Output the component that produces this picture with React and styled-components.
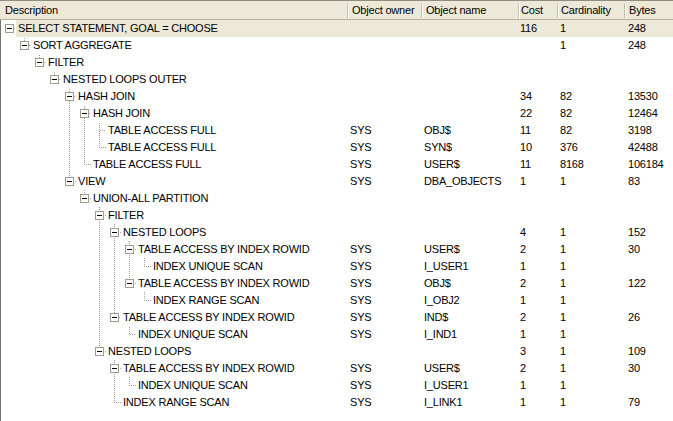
import React from "react";
import styled, { createGlobalStyle } from "styled-components";

const GlobalStyle = createGlobalStyle`
  html, body { margin: 0; padding: 0; background: #fff; }
  body { font-family: "Liberation Sans", Arial, sans-serif; }
`;

const COLS = [
  { key: "d", label: "Description", w: 348, hp: 5, bp: 0 },
  { key: "owner", label: "Object owner", w: 74, hp: 4, bp: 2 },
  { key: "name", label: "Object name", w: 97, hp: 4, bp: 2 },
  { key: "cost", label: "Cost", w: 39, hp: 2, bp: 1 },
  { key: "card", label: "Cardinality", w: 67, hp: 3, bp: 2 },
  { key: "bytes", label: "Bytes", w: 0, hp: 4, bp: 3 },
];

const ROWS = [
  { l: 0, d: "SELECT STATEMENT, GOAL = CHOOSE", cost: "116", card: "1", bytes: "248" },
  { l: 1, d: "SORT AGGREGATE", card: "1", bytes: "248" },
  { l: 2, d: "FILTER" },
  { l: 3, d: "NESTED LOOPS OUTER" },
  { l: 4, d: "HASH JOIN", cost: "34", card: "82", bytes: "13530" },
  { l: 5, d: "HASH JOIN", cost: "22", card: "82", bytes: "12464" },
  { l: 6, d: "TABLE ACCESS FULL", owner: "SYS", name: "OBJ$", cost: "11", card: "82", bytes: "3198" },
  { l: 6, d: "TABLE ACCESS FULL", owner: "SYS", name: "SYN$", cost: "10", card: "376", bytes: "42488" },
  { l: 5, d: "TABLE ACCESS FULL", owner: "SYS", name: "USER$", cost: "11", card: "8168", bytes: "106184" },
  { l: 4, d: "VIEW", owner: "SYS", name: "DBA_OBJECTS", cost: "1", card: "1", bytes: "83" },
  { l: 5, d: "UNION-ALL PARTITION" },
  { l: 6, d: "FILTER" },
  { l: 7, d: "NESTED LOOPS", cost: "4", card: "1", bytes: "152" },
  { l: 8, d: "TABLE ACCESS BY INDEX ROWID", owner: "SYS", name: "USER$", cost: "2", card: "1", bytes: "30" },
  { l: 9, d: "INDEX UNIQUE SCAN", owner: "SYS", name: "I_USER1", cost: "1", card: "1" },
  { l: 8, d: "TABLE ACCESS BY INDEX ROWID", owner: "SYS", name: "OBJ$", cost: "2", card: "1", bytes: "122" },
  { l: 9, d: "INDEX RANGE SCAN", owner: "SYS", name: "I_OBJ2", cost: "1", card: "1" },
  { l: 7, d: "TABLE ACCESS BY INDEX ROWID", owner: "SYS", name: "IND$", cost: "2", card: "1", bytes: "26" },
  { l: 8, d: "INDEX UNIQUE SCAN", owner: "SYS", name: "I_IND1", cost: "1", card: "1" },
  { l: 6, d: "NESTED LOOPS", cost: "3", card: "1", bytes: "109" },
  { l: 7, d: "TABLE ACCESS BY INDEX ROWID", owner: "SYS", name: "USER$", cost: "2", card: "1", bytes: "30" },
  { l: 8, d: "INDEX UNIQUE SCAN", owner: "SYS", name: "I_USER1", cost: "1", card: "1" },
  { l: 7, d: "INDEX RANGE SCAN", owner: "SYS", name: "I_LINK1", cost: "1", card: "1", bytes: "79" },
];

const ROW_H = 17;
const HEADER_H = 20;
const INDENT = 15;

function hasNextSibling(i) {
  const L = ROWS[i].l;
  for (let j = i + 1; j < ROWS.length; j++) {
    if (ROWS[j].l < L) return false;
    if (ROWS[j].l === L) return true;
  }
  return false;
}

function computeTree() {
  const ancestors = [];
  return ROWS.map((r, i) => {
    ancestors[r.l] = i;
    const cont = [];
    for (let k = 1; k < r.l; k++) cont.push(hasNextSibling(ancestors[k]) ? k : null);
    return {
      ...r,
      hasChildren: i + 1 < ROWS.length && ROWS[i + 1].l > r.l,
      hasNext: hasNextSibling(i),
      cont: cont.filter((k) => k !== null),
    };
  });
}

const Frame = styled.div`
  width: 673px;
  height: 421px;
  display: flex;
  flex-direction: column;
  overflow: hidden;
  background: #fff;
  color: #000;
  font-size: 11px;
  letter-spacing: -0.2px;
`;

const HeaderBar = styled.div`
  display: flex;
  flex: none;
  height: ${HEADER_H}px;
  box-sizing: border-box;
  background: #ece9d8;
  border-top: 1px solid #8f8d80;
  border-bottom: 1px solid #b5b2a0;
`;

const HeaderCell = styled.div`
  position: relative;
  box-sizing: border-box;
  flex: ${(p) => (p.$w ? `0 0 ${p.$w}px` : "1 1 auto")};
  padding-left: ${(p) => p.$pad}px;
  line-height: 18px;
  white-space: nowrap;
  overflow: visible;
  &::after {
    content: "";
    position: absolute;
    right: 0;
    top: 2px;
    bottom: 1px;
    width: 1px;
    background: #c3c0ad;
    box-shadow: 1px 0 0 #ffffff;
    display: ${(p) => (p.$w ? "block" : "none")};
  }
`;

const Body = styled.div`
  flex: 1 1 auto;
  display: flex;
  flex-direction: column;
  border-left: 1px solid #75736a;
`;

const Row = styled.div`
  display: flex;
  height: ${ROW_H}px;
  line-height: ${ROW_H}px;
  white-space: nowrap;
`;

const DescCell = styled.div`
  display: flex;
  flex: 0 0 ${348 - 1}px;
  overflow: hidden;
`;

const Guides = styled.svg`
  flex: none;
  display: block;
`;

const DescText = styled.div`
  flex: 1 1 auto;
  padding-left: 2px;
  background: ${(p) => (p.$sel ? "#ece9d8" : "transparent")};
`;

const Cell = styled.div`
  box-sizing: border-box;
  flex: ${(p) => (p.$w ? `0 0 ${p.$w}px` : "1 1 auto")};
  padding-left: ${(p) => p.$pad}px;
  overflow: hidden;
  background: ${(p) => (p.$sel ? "#ece9d8" : "transparent")};
`;

function TreeGuides({ node, index }) {
  const L = node.l;
  const w = INDENT + INDENT * L;
  const top = HEADER_H + ROW_H * index;
  const shift = (1 + top) % 2;
  const pid = `dots${index}`;
  const cx = 8 + INDENT * L;
  const cy = 8;
  const fill = `url(#${pid})`;
  const parts = [];
  node.cont.forEach((k) => {
    parts.push(<rect key={`c${k}`} x={8 + INDENT * k} y={0} width={1} height={ROW_H} fill={fill} />);
  });
  if (L > 0) {
    parts.push(<rect key="up" x={cx} y={0} width={1} height={cy + 1} fill={fill} />);
    if (node.hasNext) parts.push(<rect key="dn" x={cx} y={cy} width={1} height={ROW_H - cy} fill={fill} />);
  }
  parts.push(<rect key="h" x={cx} y={cy} width={w - cx} height={1} fill={fill} />);
  return (
    <Guides width={w} height={ROW_H} shapeRendering="crispEdges">
      <defs>
        <pattern id={pid} width="2" height="2" patternUnits="userSpaceOnUse" patternTransform={`translate(${shift} 0)`}>
          <rect x="0" y="0" width="1" height="1" fill="#a0a0a0" />
          <rect x="1" y="1" width="1" height="1" fill="#a0a0a0" />
        </pattern>
      </defs>
      {parts}
      {node.hasChildren && (
        <g>
          <rect x={cx - 4 + 0.5} y={cy - 4 + 0.5} width={8} height={8} fill="#fff" stroke="#a09c8c" strokeWidth="1" />
          <rect x={cx - 2} y={cy} width={5} height={1} fill="#000" />
        </g>
      )}
    </Guides>
  );
}

export default function App() {
  const nodes = computeTree();
  return (
    <Frame>
      <GlobalStyle />
      <HeaderBar>
        {COLS.map((c) => (
          <HeaderCell key={c.key} $w={c.w} $pad={c.hp}>
            {c.label}
          </HeaderCell>
        ))}
      </HeaderBar>
      <Body>
        {nodes.map((n, i) => {
          const sel = i === 0;
          return (
            <Row key={i}>
              <DescCell>
                <TreeGuides node={n} index={i} />
                <DescText $sel={sel}>{n.d}</DescText>
              </DescCell>
              {COLS.slice(1).map((c) => (
                <Cell key={c.key} $w={c.w} $pad={c.bp} $sel={sel}>
                  {n[c.key] || ""}
                </Cell>
              ))}
            </Row>
          );
        })}
      </Body>
    </Frame>
  );
}
